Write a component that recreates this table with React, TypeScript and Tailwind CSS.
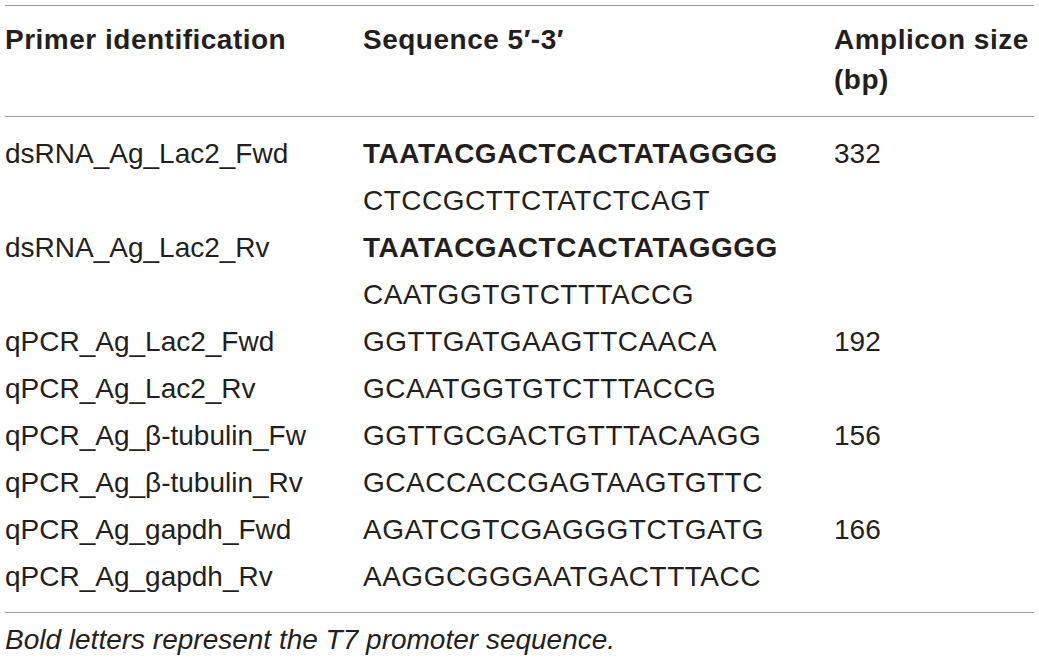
const rows: { id: string; seq: string; bold?: boolean; size?: string }[] = [
  { id: "dsRNA_Ag_Lac2_Fwd", seq: "TAATACGACTCACTATAGGGG", bold: true, size: "332" },
  { id: "", seq: "CTCCGCTTCTATCTCAGT" },
  { id: "dsRNA_Ag_Lac2_Rv", seq: "TAATACGACTCACTATAGGGG", bold: true },
  { id: "", seq: "CAATGGTGTCTTTACCG" },
  { id: "qPCR_Ag_Lac2_Fwd", seq: "GGTTGATGAAGTTCAACA", size: "192" },
  { id: "qPCR_Ag_Lac2_Rv", seq: "GCAATGGTGTCTTTACCG" },
  { id: "qPCR_Ag_β-tubulin_Fw", seq: "GGTTGCGACTGTTTACAAGG", size: "156" },
  { id: "qPCR_Ag_β-tubulin_Rv", seq: "GCACCACCGAGTAAGTGTTC" },
  { id: "qPCR_Ag_gapdh_Fwd", seq: "AGATCGTCGAGGGTCTGATG", size: "166" },
  { id: "qPCR_Ag_gapdh_Rv", seq: "AAGGCGGGAATGACTTTACC" },
];

export default function App() {
  return (
    <div className="h-[662px] w-[1039px] bg-white px-[5px] pt-[5px] font-['Liberation_Sans',Arial,sans-serif] text-[28px] text-[#231f20]">
      <div className="border-t border-[#999999]">
        <div className="grid grid-cols-[358px_471px_1fr] border-b border-[#999999] pt-[14px] pb-[16px] font-bold leading-[40px] tracking-[0.5px]">
          <div>Primer identification</div>
          <div>Sequence 5′-3′</div>
          <div>
            Amplicon size
            <br />
            (bp)
          </div>
        </div>
        <div className="border-b border-[#999999] pt-[13px] pb-[12px]">
          {rows.map((r, i) => (
            <div key={i} className="grid h-[47px] grid-cols-[358px_471px_1fr] items-center">
              <div>{r.id}</div>
              <div className={r.bold ? "font-bold tracking-[0.5px]" : "tracking-[0.5px]"}>{r.seq}</div>
              <div>{r.size ?? ""}</div>
            </div>
          ))}
        </div>
        <div className="mt-[3px] flex h-[47px] items-center italic">
          Bold letters represent the T7 promoter sequence.
        </div>
      </div>
    </div>
  );
}
